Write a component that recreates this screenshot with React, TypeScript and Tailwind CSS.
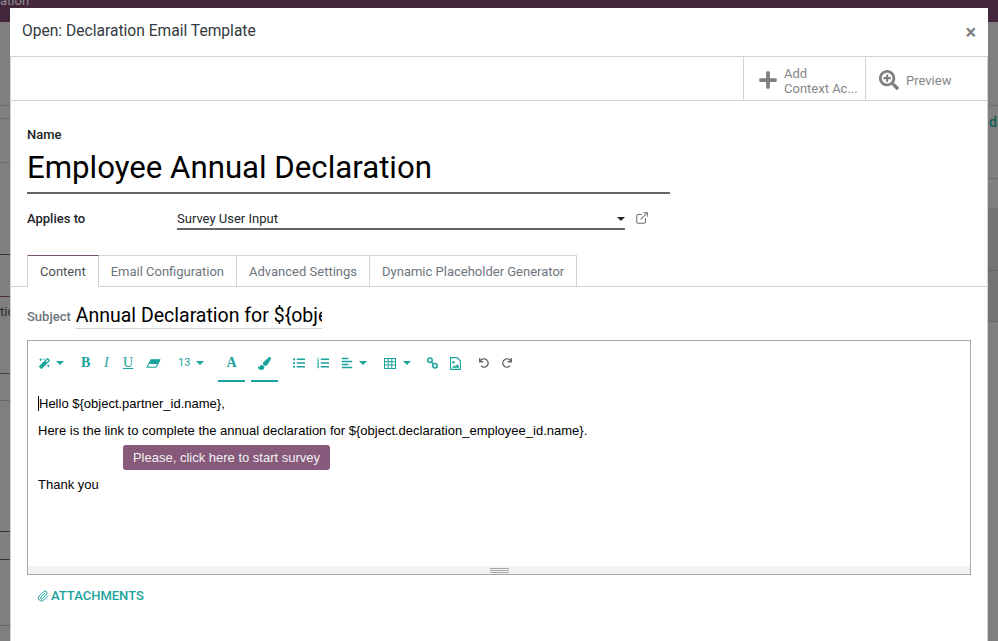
import React from 'react';
import {
  FaAlignLeft,
  FaListOl,
  FaListUl,
  FaMagic,
  FaPaintBrush,
  FaPlus,
  FaRedo,
  FaSearchPlus,
  FaUndo,
} from 'react-icons/fa';
import { ExternalLink, Paperclip } from 'lucide-react';

const Caret = ({ className = 'text-[#1aa39c]' }: { className?: string }) => (
  <span className={`inline-block w-0 h-0 border-x-[4px] border-x-transparent border-t-[4px] border-t-current ${className}`} />
);

const EraserIcon = () => (
  <svg width="15" height="9" viewBox="0 0 15 9" fill="none">
    <path d="M5 .7h9L10 8.3H1z" stroke="currentColor" strokeWidth="1.1" strokeLinejoin="round" />
    <path d="M5 .7h9l-2.2 4.2H3z" fill="currentColor" />
  </svg>
);

const TableIcon = () => (
  <svg width="12" height="11" viewBox="0 0 12 11" fill="none" stroke="currentColor" strokeWidth="1">
    <rect x=".5" y=".5" width="11" height="10" />
    <path d="M.5 3.7h11M.5 7h11M4.2 .5v10M7.8 .5v10" />
  </svg>
);

const LinkIcon = () => (
  <svg width="11" height="12" viewBox="0 0 11 12" fill="none" stroke="currentColor" strokeWidth="1.5">
    <circle cx="3" cy="3.2" r="2.2" />
    <circle cx="8" cy="8.8" r="2.2" />
    <path d="M4.5 5l2 2" />
  </svg>
);

const PictureIcon = () => (
  <svg width="11" height="13" viewBox="0 0 11 13" fill="none">
    <path d="M.6.6h6.6l3.2 3.2v8.6H.6z" stroke="currentColor" strokeWidth="1.1" />
    <circle cx="3.5" cy="5.2" r="1.2" fill="currentColor" />
    <path d="M2 10.8l2.6-2.6 1.2 1.1 1.6-2.2 1.4 2v1.7z" fill="currentColor" />
  </svg>
);

const tabs = ['Email Configuration', 'Advanced Settings', 'Dynamic Placeholder Generator'];

const Toolbar = () => (
  <div className="flex items-start h-[40px] pl-[11px] pt-[14px] text-[#1aa39c]">
    <div className="flex items-center gap-[6px] w-[42px] h-[16px]">
      <FaMagic size={11} />
      <Caret />
    </div>
    <div className="flex items-center h-[16px] w-[97px] font-['Liberation_Serif',serif] text-[14px] leading-none">
      <span className="w-[23px] font-bold">B</span>
      <span className="w-[19px] italic">I</span>
      <span className="w-[23px] underline">U</span>
      <EraserIcon />
    </div>
    <div className="flex items-center gap-[6px] w-[40px] h-[16px] text-[11px]">
      <span>13</span>
      <Caret />
    </div>
    <div className="flex flex-col items-center w-[27px] mr-[6px]">
      <span className="h-[16px] font-['Liberation_Serif',serif] font-bold text-[14px] leading-[16px]">A</span>
      <span className="w-full h-[2px] mt-[9px] bg-[#1aa39c]" />
    </div>
    <div className="flex flex-col items-center w-[27px] mr-[15px]">
      <span className="h-[16px] flex items-center"><FaPaintBrush size={13} /></span>
      <span className="w-full h-[2px] mt-[9px] bg-[#1aa39c]" />
    </div>
    <div className="flex items-center h-[16px] w-[24px]"><FaListUl size={12} /></div>
    <div className="flex items-center h-[16px] w-[24px]"><FaListOl size={12} /></div>
    <div className="flex items-center gap-[6px] h-[16px] w-[43px]">
      <FaAlignLeft size={12} />
      <Caret />
    </div>
    <div className="flex items-center gap-[7px] h-[16px] w-[43px]">
      <TableIcon />
      <Caret />
    </div>
    <div className="flex items-center h-[16px] w-[23px]"><LinkIcon /></div>
    <div className="flex items-center h-[16px] w-[29px]"><PictureIcon /></div>
    <div className="flex items-center h-[16px] w-[23px] text-[#666666]"><FaUndo size={10} /></div>
    <div className="flex items-center h-[16px] text-[#666666]"><FaRedo size={10} /></div>
  </div>
);

export default function App() {
  return (
    <div className="relative w-[998px] h-[641px] overflow-hidden bg-[#7f7f7f] font-['Roboto',sans-serif]">
      {/* page behind the dialog */}
      <div className="h-[22px] bg-[#43283c] overflow-hidden">
        <span className="block -mt-[9px] text-[13px] text-[#8f8f8f]">ation</span>
      </div>
      <div className="flex justify-between">
        <div className="w-[10px]">
          <div className="h-[84px] border-b border-[#6b6b6b]" />
          <div className="h-[13px] border-b border-[#6b6b6b]" />
          <div className="h-[44px] border-b border-[#6b6b6b]" />
          <div className="h-[92px] border-b border-[#333333]" />
          <div className="h-[42px] border-b border-[#4a2a42]" />
          <div className="h-[77px] border-b border-[#444444] pt-[7px] text-[13px] leading-[16px] text-[#2a2a2a] whitespace-nowrap">tic</div>
          <div className="h-[27px] border-b border-[#666666]" />
          <div className="h-[131px] border-b border-[#333333]" />
          <div className="h-[28px] border-b border-[#333333]" />
          <div className="h-[66px] border-b border-[#666666]" />
        </div>
        <div className="w-[10px]">
          <div className="h-[84px] border-b border-[#6b6b6b]" />
          <div className="h-[73px] border-b border-[#6b6b6b] pt-[8px] pl-px text-[14px] font-medium leading-[16px] text-[#0f5f58] whitespace-nowrap overflow-hidden">du</div>
          <div className="h-[29px]" />
          <div className="h-[63px] bg-[#737373] border-b border-[#666666]" />
          <div className="h-[51px] bg-[#737373] border-b border-[#666666]" />
        </div>
      </div>

      <div className="absolute left-[10px] top-[8px] w-[978px] h-[633px] bg-white flex flex-col">
        <div className="flex items-center justify-between h-[49px] pl-[12px] pr-[12px] border-b border-[#ced4da]">
          <h4 className="text-[15.6px] text-[#343a40]">Open: Declaration Email Template</h4>
          <span className="text-[#7f7f7f] text-[20px] font-bold leading-none">×</span>
        </div>

        <div className="flex justify-end h-[44px] border-x border-b border-[#ced4da] text-[13px] text-[#868686]">
          <div className="flex items-center w-[122px] pl-[14px] pt-[3px] border-l border-[#ced4da]">
            <FaPlus size={20} className="text-[#7f7f7f] mr-[6px] -mt-px shrink-0" />
            <div className="leading-[15px] whitespace-nowrap pt-[2px]">
              <div>Add</div>
              <div>Context Ac...</div>
            </div>
          </div>
          <div className="flex items-center w-[122px] pl-[13px] pt-[3px] border-l border-[#ced4da]">
            <FaSearchPlus size={20} className="text-[#7f7f7f] mr-[7px]" />
            <span className="pt-[2px]">Preview</span>
          </div>
        </div>

        <div className="flex-1 border-x border-[#ced4da] pt-[26px]">
          <div className="px-[16px]">
            <div className="text-[13px] font-medium text-[#212529] leading-[16px]">Name</div>
            <div className="w-[643px] mt-[2px] h-[49px] border-b-2 border-[#666666] text-[31.2px] text-[#000000] leading-[46px]">
              Employee Annual Declaration
            </div>
            <div className="flex items-start mt-[16px]">
              <div className="w-[150px] text-[13px] font-medium text-[#212529] leading-[18px]">Applies to</div>
              <div className="flex justify-between items-center w-[448px] h-[20px] pt-px pb-px border-b-2 border-[#666666] text-[13px] text-[#212529]">
                <span>Survey User Input</span>
                <Caret className="text-[#212529]" />
              </div>
              <ExternalLink size={14} strokeWidth={1.75} className="ml-[10px] mt-px text-[#6f6f6f]" />
            </div>
          </div>

          <div className="flex mt-[25px] h-[32px] pl-[16px] border-b border-[#ced4da] text-[13px]">
            <div className="h-[32px] px-[12px] leading-[31px] border-x border-t border-[#ced4da] border-t-[#7c4f6e] bg-white text-[#495057]">
              Content
            </div>
            {tabs.map((t) => (
              <div key={t} className="h-[31px] px-[12px] leading-[31px] border-r border-t border-[#ced4da] text-[#6c757d]">
                {t}
              </div>
            ))}
          </div>

          <div className="flex items-center mt-[16px] px-[16px]">
            <span className="text-[13px] font-medium text-[#6c757d] leading-[18px] mr-[5px] pt-[2px]">Subject</span>
            <div className="w-[246px] h-[26px] border-b border-[#ced4da] text-[19.5px] text-[#000000] leading-[26px] overflow-hidden whitespace-nowrap">
              Annual Declaration for ${'{'}object.partner_id.name{'}'}
            </div>
          </div>

          <div className="mx-[16px] mt-[11px] h-[235px] border border-[#a8a8a8] flex flex-col">
            <Toolbar />
            <div className="flex-1 pl-[10px] pt-[13px] font-['Liberation_Sans',sans-serif] text-[13px] text-[#000000] leading-[18px]">
              <p className="border-l border-black w-fit leading-[15px] mt-[2px]">Hello ${'{'}object.partner_id.name{'}'},</p>
              <p className="mt-[11px]">Here is the link to complete the annual declaration for ${'{'}object.declaration_employee_id.name{'}'}.</p>
              <div className="mt-[5px] ml-[85px] w-[207px] h-[25px] rounded-[3px] bg-[#875a7b] text-[#f0f0f0] text-center leading-[25px]">
                Please, click here to start survey
              </div>
              <p className="mt-[6px]">Thank you</p>
            </div>
            <div className="flex flex-col items-center justify-center gap-[1px] h-[8px] bg-[#f3f3f3]">
              <span className="w-[19px] h-px bg-[#a8a8a8]" />
              <span className="w-[19px] h-px bg-[#a8a8a8]" />
              <span className="w-[19px] h-px bg-[#a8a8a8]" />
            </div>
          </div>

          <div className="flex items-center gap-[2px] mt-[13px] pl-[26px] text-[13px] font-medium text-[#1aa39c] leading-[16px]">
            <Paperclip size={12} strokeWidth={2} />
            <span>ATTACHMENTS</span>
          </div>
        </div>
      </div>
    </div>
  );
}
